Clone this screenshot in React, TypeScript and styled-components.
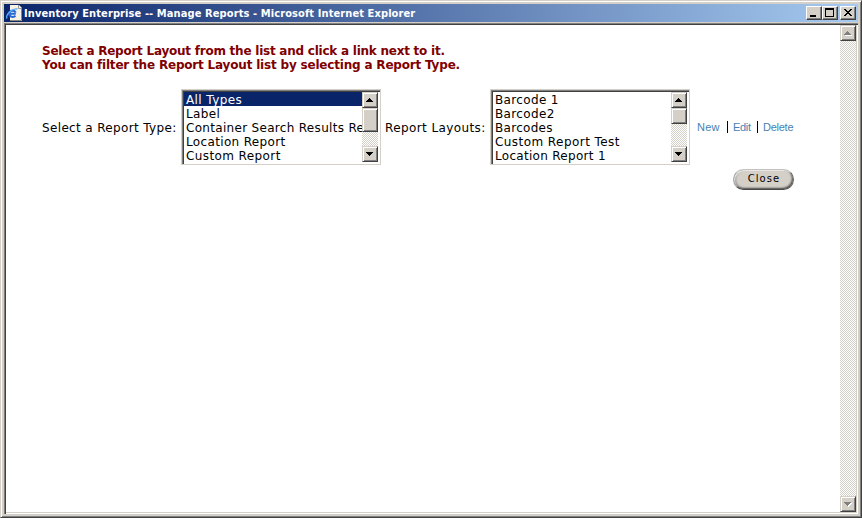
import React from 'react';
import styled, { createGlobalStyle } from 'styled-components';

const Global = createGlobalStyle`
  * { box-sizing: border-box; }
  body { margin: 0; background: #d4d0c8; }
`;

const Frame = styled.div`
  width: 862px; height: 518px; background: #d4d0c8; padding: 3px;
  border: 1px solid; border-color: #d4d0c8 #404040 #404040 #d4d0c8;
  box-shadow: inset 1px 1px 0 #fff, inset -1px -1px 0 #808080;
  font-family: "DejaVu Sans", Verdana, sans-serif;
`;
const TitleBar = styled.header`
  height: 18px; display: flex; align-items: center; padding: 0 2px;
  background: linear-gradient(90deg, #0a246a, #a6caf0);
`;
const Title = styled.h1`
  margin: 0 auto 0 2px; color: #fff; white-space: nowrap; height: 18px;
  font: bold 11px/20px "DejaVu Sans Condensed", Tahoma, sans-serif; letter-spacing: 0.1px;
`;
const bevel = `
  background: #d4d0c8; border: 1px solid; border-color: #d4d0c8 #404040 #404040 #d4d0c8;
  box-shadow: inset 1px 1px 0 #fff, inset -1px -1px 0 #808080;
`;
const WinButton = styled.button<{ $gap?: boolean }>`
  width: 16px; height: 14px; padding: 0; display: block; flex: none;
  background: #d4d0c8; border: 1px solid; border-color: #fff #404040 #404040 #fff;
  box-shadow: inset -1px -1px 0 #808080; margin-left: ${p => (p.$gap ? 2 : 0)}px;
  svg { display: block; }
`;
const View = styled.main`
  height: 491px; display: flex; background: #fff; margin-top: 1px; padding: 2px;
  box-shadow: inset 1px 1px 0 #808080, inset 2px 2px 0 #404040, inset -1px -1px 0 #fff, inset -2px -2px 0 #d4d0c8;
`;
const Page = styled.div`
  flex: 1; padding: 19px 0 0 36px; font-size: 12px; line-height: 14px; color: #000;
`;
const Intro = styled.p<{ $s: number }>`
  margin: 0; color: #800000; font-weight: bold; height: 14px; white-space: nowrap; letter-spacing: ${p => p.$s}px;
`;
const Form = styled.div`
  display: flex; align-items: center; height: 76px; margin-top: 17px;
`;
const Label = styled.label<{ $w: number; $s: number; $pad?: number }>`
  width: ${p => p.$w}px; height: 14px; line-height: 16px;
  padding-left: ${p => p.$pad ?? 0}px; letter-spacing: ${p => p.$s}px; white-space: nowrap;
`;
const List = styled.div`
  width: 200px; height: 76px; display: flex; flex: none; padding: 2px; background: #fff;
  border: 1px solid #d4d0c8;
  box-shadow: inset 1px 1px 0 #808080, inset 2px 2px 0 #404040;
`;
const Options = styled.div`
  flex: 1; min-width: 0;
`;
const Option = styled.div<{ $on?: boolean; $s?: number }>`
  height: 14px; line-height: 16px; padding-left: 2px; white-space: nowrap; letter-spacing: ${p => p.$s ?? 0.35}px;
  color: ${p => (p.$on ? '#fff' : '#000')}; background: ${p => (p.$on ? '#0a246a' : 'transparent')};
`;
const Track = styled.div`
  width: 16px; flex: none; display: flex; flex-direction: column;
  background: repeating-conic-gradient(#d4d0c8 0 25%, #fff 0 50%) 0 0 / 2px 2px;
`;
const ArrowBox = styled.div`
  height: 16px;
  ${bevel}
  svg { display: block; }
`;
const Thumb = styled.div<{ $h: number }>`
  height: ${p => p.$h}px;
  ${bevel}
`;
const Fill = styled.div`
  flex: 1;
`;
const Links = styled.nav`
  display: flex; align-items: center; margin: -1px 0 0 7px;
`;
const Link = styled.a<{ $w: number; $s?: number }>`
  width: ${p => p.$w}px; color: #4682b4; font: 11px/14px "Liberation Sans", Arial, sans-serif;
  letter-spacing: ${p => p.$s ?? 0}px; white-space: nowrap;
`;
const Divider = styled.span`
  width: 1px; height: 12px; margin-right: 5px; background: #000;
`;
const Close = styled.button`
  display: block; margin: 4px 0 0 691px; width: 61px; height: 21px; border-radius: 11px; padding: 0 0 1px 1px;
  border: 1px solid; border-color: #c4c2be #606060 #484848 #a4a4a4; background: #d4d0c8; color: #000;
  box-shadow: inset 1px 1px 1px #eeece8, inset -1px -1px 2px #484848, inset 2px 0 2px #999;
  font: 10px/16px "DejaVu Sans", Verdana, sans-serif; letter-spacing: 1.1px;
`;

const UP = 'M6 5h1v1h1v1h1v1h1v1h-7v-1h1v-1h1v-1h1z';
const DOWN = 'M3 5h7v1h-1v1h-1v1h-1v1h-1v-1h-1v-1h-1v-1h-1z';

const Arrow = ({ down, off }: { down?: boolean; off?: boolean }) => (
  <svg width="14" height="14" viewBox="0 0 14 14" shapeRendering="crispEdges">
    {off && <path transform="translate(1 1)" fill="#fff" d={down ? DOWN : UP} />}
    <path fill={off ? '#808080' : '#000'} d={down ? DOWN : UP} />
  </svg>
);
const Scroll = ({ thumb, off }: { thumb?: number; off?: boolean }) => (
  <Track>
    <ArrowBox><Arrow off={off} /></ArrowBox>
    {thumb && <Thumb $h={thumb} />}
    <Fill />
    <ArrowBox><Arrow down off={off} /></ArrowBox>
  </Track>
);
const PageIcon = () => (
  <svg width="16" height="16" viewBox="0 0 16 16">
    <path d="M4 0h9l3 3v13H4z" fill="#f6f2e6" />
    <path d="M12.500 0v3.500H16" fill="none" stroke="#999" />
    <path d="M15.500 3.500v12H4" fill="none" stroke="#8a8678" />
    <path d="M9.800 8.800H3.200M9.600 7.500C9 5 3.400 4.800 3.200 8.600C3.200 12.400 8 12.600 9.400 10.600" fill="none" stroke="#2468d8" strokeWidth="2" />
    <path d="M1.200 13.500C-1.500 11 6 2.500 11.500 4" fill="none" stroke="#58acf8" strokeWidth="1.300" />
  </svg>
);

export default function App() {
  return (
    <>
      <Global />
      <Frame>
        <TitleBar>
          <PageIcon />
          <Title>Inventory Enterprise -- Manage Reports - Microsoft Internet Explorer</Title>
          <WinButton>
            <svg width="14" height="12" shapeRendering="crispEdges"><path d="M3 8h6v2H3z" /></svg>
          </WinButton>
          <WinButton>
            <svg width="14" height="12" shapeRendering="crispEdges"><path fillRule="evenodd" d="M2 1h9v9H2zM3 3v6h7V3z" /></svg>
          </WinButton>
          <WinButton $gap>
            <svg width="14" height="12" shapeRendering="crispEdges">
              <path d="M3 2h2v1h1v1h2V3h1V2h2v1h-1v1H9v1H8v1h1v1h1v1h1v1H9V8H8V7H6v1H5v1H3V8h1V7h1V6h1V5H5V4H4V3H3z" />
            </svg>
          </WinButton>
        </TitleBar>
        <View>
          <Page>
            <Intro $s={-0.24}>Select a Report Layout from the list and click a link next to it.</Intro>
            <Intro $s={-0.19}>You can filter the Report Layout list by selecting a Report Type.</Intro>
            <Form>
              <Label $w={139} $s={0.35}>Select a Report Type:</Label>
              <List>
                <Options>
                  <Option $on $s={0.4}>All Types</Option>
                  <Option>Label</Option>
                  <Option $s={0.31}>Container Search Results Re</Option>
                  <Option>Location Report</Option>
                  <Option $s={0.4}>Custom Report</Option>
                </Options>
                <Scroll thumb={24} />
              </List>
              <Label $w={109} $s={0.4} $pad={4}>Report Layouts:</Label>
              <List>
                <Options>
                  <Option>Barcode 1</Option>
                  <Option>Barcode2</Option>
                  <Option $s={0.3}>Barcodes</Option>
                  <Option $s={0.44}>Custom Report Test</Option>
                  <Option $s={0.3}>Location Report 1</Option>
                </Options>
                <Scroll thumb={16} />
              </List>
              <Links>
                <Link $w={30} $s={0.2}>New</Link>
                <Divider />
                <Link $w={24} $s={-0.3}>Edit</Link>
                <Divider />
                <Link $w={32} $s={-0.25}>Delete</Link>
              </Links>
            </Form>
            <Close>Close</Close>
          </Page>
          <Scroll off />
        </View>
      </Frame>
    </>
  );
}
